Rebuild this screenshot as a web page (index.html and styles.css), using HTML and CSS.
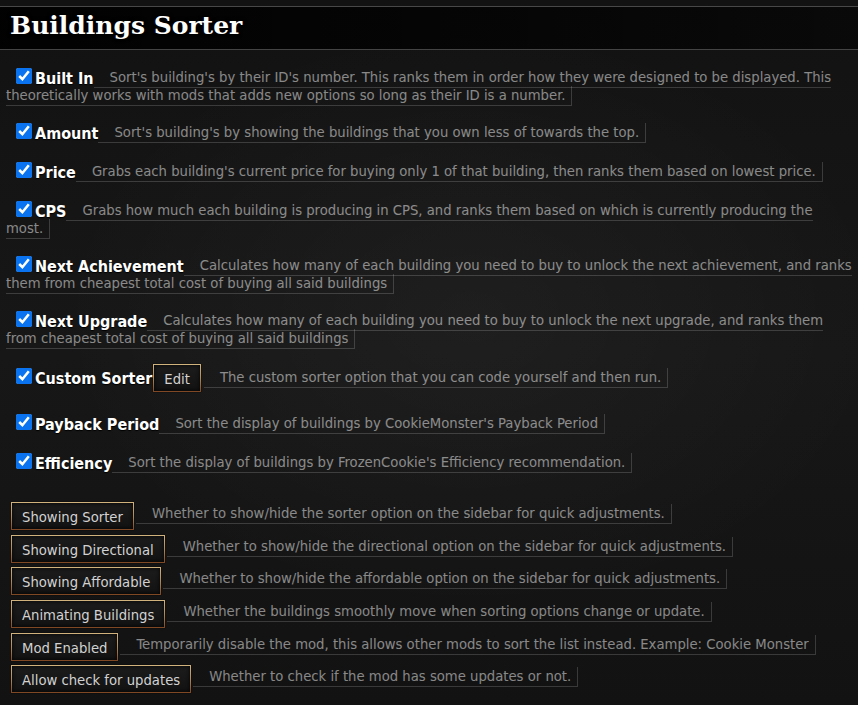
FILE: index.html
```html
<!DOCTYPE html>
<html>
<head>
<meta charset="utf-8">
<link rel="stylesheet" href="styles.css">
</head>
<body>
<div class="menu">
  <div class="title">Buildings Sorter</div>
  <div class="opts">
    <div class="row"><input type="checkbox" checked><span class="lbl">Built In</span><span class="desc">Sort's building's by their ID's number. This ranks them in order how they were designed to be displayed. This theoretically works with mods that adds new options so long as their ID is a number.</span></div>
    <div class="row"><input type="checkbox" checked><span class="lbl">Amount</span><span class="desc">Sort's building's by showing the buildings that you own less of towards the top.</span></div>
    <div class="row"><input type="checkbox" checked><span class="lbl">Price</span><span class="desc">Grabs each building's current price for buying only 1 of that building, then ranks them based on lowest price.</span></div>
    <div class="row"><input type="checkbox" checked><span class="lbl">CPS</span><span class="desc">Grabs how much each building is producing in CPS, and ranks them based on which is currently producing the most.</span></div>
    <div class="row"><input type="checkbox" checked><span class="lbl">Next Achievement</span><span class="desc">Calculates how many of each building you need to buy to unlock the next achievement, and ranks them from cheapest total cost of buying all said buildings</span></div>
    <div class="row"><input type="checkbox" checked><span class="lbl">Next Upgrade</span><span class="desc">Calculates how many of each building you need to buy to unlock the next upgrade, and ranks them from cheapest total cost of buying all said buildings</span></div>
    <div class="row"><input type="checkbox" checked><span class="lbl">Custom Sorter</span><a class="btn edit">Edit</a><span class="desc">The custom sorter option that you can code yourself and then run.</span></div>
    <div class="row"><input type="checkbox" checked><span class="lbl">Payback Period</span><span class="desc">Sort the display of buildings by CookieMonster's Payback Period</span></div>
    <div class="row"><input type="checkbox" checked><span class="lbl">Efficiency</span><span class="desc">Sort the display of buildings by FrozenCookie's Efficiency recommendation.</span></div>
  </div>
  <div class="toggles">
    <div class="brow"><a class="btn">Showing Sorter</a><span class="desc">Whether to show/hide the sorter option on the sidebar for quick adjustments.</span></div>
    <div class="brow"><a class="btn">Showing Directional</a><span class="desc">Whether to show/hide the directional option on the sidebar for quick adjustments.</span></div>
    <div class="brow"><a class="btn">Showing Affordable</a><span class="desc">Whether to show/hide the affordable option on the sidebar for quick adjustments.</span></div>
    <div class="brow"><a class="btn">Animating Buildings</a><span class="desc">Whether the buildings smoothly move when sorting options change or update.</span></div>
    <div class="brow"><a class="btn">Mod Enabled</a><span class="desc">Temporarily disable the mod, this allows other mods to sort the list instead. Example: Cookie Monster</span></div>
    <div class="brow"><a class="btn">Allow check for updates</a><span class="desc">Whether to check if the mod has some updates or not.</span></div>
  </div>
</div>
</body>
</html>
```
FILE: styles.css
```css
html, body {
  margin: 0;
  height: 100%;
}
body {
  background-color: #151515;
  background-image:
    radial-gradient(ellipse 70% 60% at 55% 45%, rgba(255,255,255,0.035), rgba(255,255,255,0) 70%),
    linear-gradient(180deg, #121212 0%, #171717 50%, #121212 100%);
  font-family: "DejaVu Sans Condensed", "DejaVu Sans", sans-serif;
  font-size: 14.7px;
  color: rgba(255,255,255,0.5);
  overflow: hidden;
}
.menu {
  padding-top: 6px;
}
.title {
  border-top: 1px solid #484848;
  border-bottom: 1px solid #444;
  background: linear-gradient(90deg, rgba(0,0,0,0.92) 0%, rgba(0,0,0,0.7) 60%, rgba(0,0,0,0.5) 100%);
  font-family: "DejaVu Serif", serif;
  font-weight: bold;
  font-size: 25px;
  line-height: 30px;
  color: #fff;
  padding: 4px 10px 8px 10px;
  text-shadow: 0 1px 2px #000, 0 0 4px rgba(0,0,0,0.8);
}
.opts {
  margin: 7px 6px 0 6px;
}
.row {
  line-height: 16px;
  padding: 11px 0 9px 0;
}
.row input {
  width: 16px;
  height: 16px;
  margin: 0 0 0 10px;
  vertical-align: -2px;
  accent-color: #0a74f0;
}
.lbl {
  font-weight: bold;
  font-size: 16px;
  color: #fff;
  margin-left: 3px;
  vertical-align: -2px;
  text-shadow: 0 1px 1px #000;
}
.desc {
  padding: 0 6px 2px 16px;
  border-bottom: 1px solid rgba(255,255,255,0.17);
  border-right: 1px solid rgba(255,255,255,0.17);
}
.btn {
  display: inline-block;
  box-sizing: border-box;
  height: 28px;
  padding: 5px 10px 4px 10px;
  line-height: 17px;
  color: #d2d2d2;
  background: linear-gradient(180deg, #1c1c1c 0%, #121212 100%);
  border: 1px solid;
  border-image: linear-gradient(180deg, #d2b47e 0%, #b08a58 50%, #7e4622 100%) 1;
  box-shadow: inset 0 0 4px rgba(0,0,0,0.9), 0 0 1px #000;
  margin-right: 6px;
  cursor: pointer;
}
.edit {
  margin: -2px 3px 2px 1px;
  vertical-align: -2px;
}
.toggles {
  margin: 19px 6px 0 6px;
}
.brow {
  padding: 2.3px 0;
  line-height: 16px;
}
.brow .btn {
  margin-left: 5px;
  margin-right: 2px;
  vertical-align: -4px;
}
```
